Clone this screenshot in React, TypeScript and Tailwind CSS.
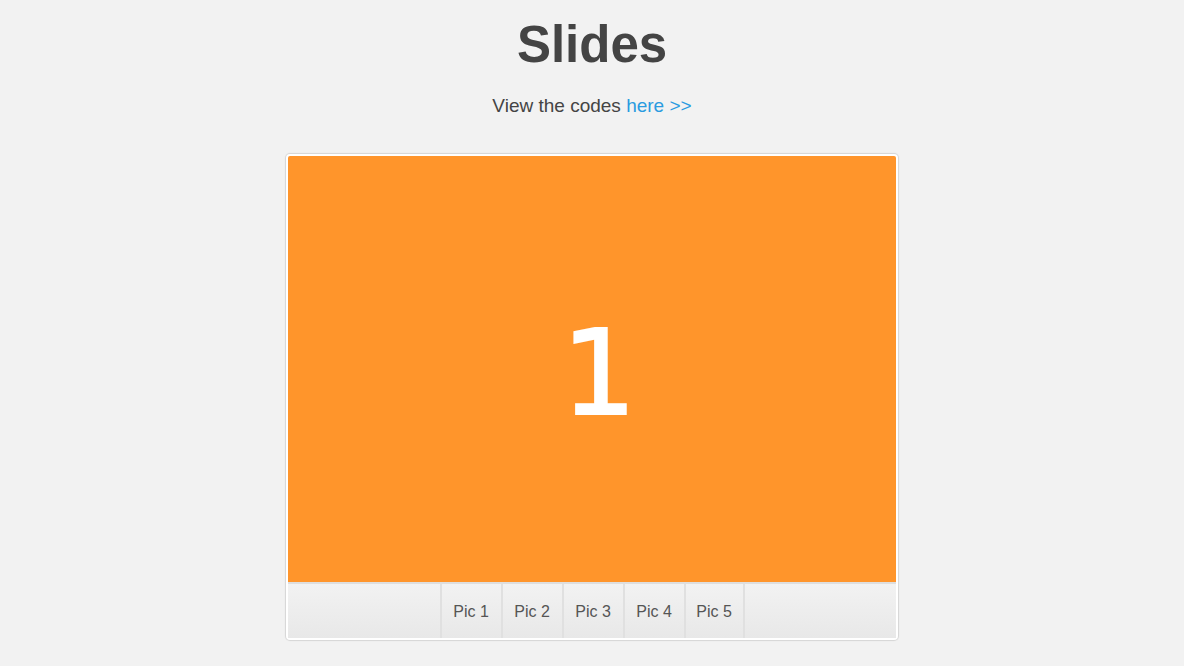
const pics = ['Pic 1', 'Pic 2', 'Pic 3', 'Pic 4', 'Pic 5'];

export default function App() {
  return (
    <div className="min-h-[666px] bg-[#f2f2f2] font-['Liberation_Sans',Arial,sans-serif]">
      <div className="flex flex-col items-center pt-[14px]">
        <h1 className="text-[51px] font-bold leading-[62px] text-[#444]">Slides</h1>
        <p className="mt-[18px] text-[19px] leading-[24px] text-[#444]">
          View the codes <a className="text-[#2a9be0]">here &gt;&gt;</a>
        </p>

        <div className="mt-[36px] w-[612px] rounded-[4px] border-2 border-white bg-white shadow-[0_0_1px_1px_rgba(0,0,0,0.12)]">
          {/* current slide */}
          <div className="flex h-[426px] items-center justify-center rounded-t-[2px] bg-[#ff952b]">
            <span className="pl-[14px] pt-[8px] font-['DejaVu_Sans',sans-serif] text-[118px] leading-none text-white [-webkit-text-stroke:2px_white]">
              1
            </span>
          </div>

          {/* slide tabs */}
          <div className="flex h-[56px] justify-center border-t-2 border-[#dedede] bg-gradient-to-b from-[#f2f2f2] to-[#e8e8e8]">
            {pics.map((p) => (
              <div
                key={p}
                className="flex w-[61px] items-center justify-center border-l-2 border-[#e0e0e0] pt-[2px] text-[16px] text-[#555] last:border-r-2"
              >
                {p}
              </div>
            ))}
          </div>
        </div>
      </div>
    </div>
  );
}
